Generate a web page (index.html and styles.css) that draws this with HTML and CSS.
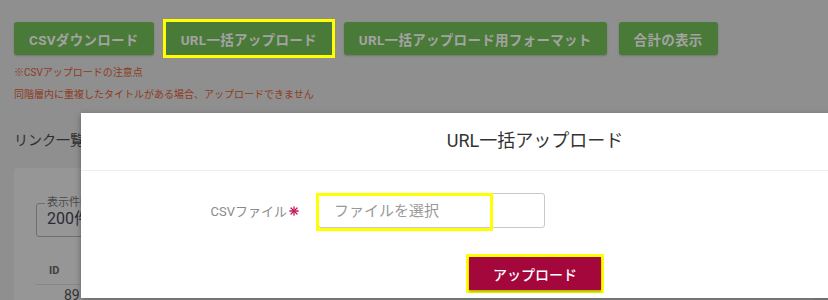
FILE: index.html
```html
<!DOCTYPE html>
<html lang="ja">
<head>
<meta charset="utf-8">
<link rel="stylesheet" href="styles.css">
</head>
<body>
<div class="page">
  <div class="toolbar">
    <button class="btn-green">CSVダウンロード</button>
    <span class="hl"><button class="btn-green">URL一括アップロード</button></span>
    <button class="btn-green">URL一括アップロード用フォーマット</button>
    <button class="btn-green">合計の表示</button>
  </div>
  <p class="note">※CSVアップロードの注意点</p>
  <p class="note">同階層内に重複したタイトルがある場合、アップロードできません</p>
  <h2 class="section-title">リンク一覧</h2>
  <div class="card">
    <fieldset class="select">
      <legend>表示件数</legend>
      <span>200件</span>
    </fieldset>
    <div class="thead">ID</div>
    <div class="trow">89</div>
  </div>
</div>

<div class="modal">
  <div class="modal-header">URL一括アップロード</div>
  <div class="modal-body">
    <div class="form-row">
      <label class="label">CSVファイル<svg class="req" viewBox="0 0 10 10" width="10" height="10"><g stroke="#c2185b" stroke-width="1.3" stroke-linecap="round"><line x1="5" y1="0.8" x2="5" y2="9.2"/><line x1="0.8" y1="5" x2="9.2" y2="5"/><line x1="2" y1="2" x2="8" y2="8"/><line x1="8" y1="2" x2="2" y2="8"/></g></svg></label>
      <div class="input">
        <span class="hl-input">ファイルを選択</span>
      </div>
    </div>
    <div class="actions">
      <span class="hl-btn"><button class="btn-upload">アップロード</button></span>
    </div>
  </div>
</div>
</body>
</html>
```

FILE: styles.css
```css
* { box-sizing: border-box; }
html, body {
  margin: 0;
  padding: 0;
  width: 828px;
  height: 300px;
  overflow: hidden;
  background: #8f8f8f;
  font-family: "Roboto", "Noto Sans CJK JP", sans-serif;
}
.page {
  padding: 22px 14px 0 14px;
}
.toolbar {
  display: flex;
  align-items: center;
  gap: 12px;
}
.btn-green {
  height: 33px;
  padding: 0 15px;
  border: none;
  border-radius: 3px;
  background: #4a7a38;
  color: #a3a3a3;
  font-family: inherit;
  font-size: 13.5px;
  font-weight: 700;
  letter-spacing: 0.3px;
  box-shadow: 0 1px 2px rgba(0,0,0,0.2);
}
.hl {
  display: inline-flex;
  outline: 3px solid #ffff00;
  outline-offset: 0;
}
.hl .btn-green { border-radius: 0; }
.note {
  margin: 0;
  font-size: 10px;
  line-height: 22px;
  color: #8e3b20;
}
.note:first-of-type { margin-top: 7px; }
.section-title {
  margin: 22px 0 0 0;
  font-size: 14px;
  font-weight: 400;
  color: #2e2e2e;
  line-height: 24px;
}
.card {
  margin-top: 16px;
  background: #969696;
  border-radius: 4px;
  height: 140px;
  padding: 29px 22px 0 22px;
}
.select {
  margin: 0;
  width: 120px;
  height: 40px;
  border: 1px solid #6f6f6f;
  border-radius: 3px;
  padding: 0 0 0 8px;
}
.select legend {
  font-size: 11px;
  color: #4a4a4a;
  padding: 0 2px;
  line-height: 12px;
}
.select span {
  font-size: 16px;
  color: #2a2a36;
  line-height: 22px;
  display: block;
  margin: -1px 0 0 2px;
}
.thead {
  margin-top: 22px;
  padding-left: 13px;
  font-size: 11px;
  font-weight: 700;
  color: #3f3f3f;
  height: 26px;
  line-height: 24px;
  border-bottom: 1px solid #888;
}
.trow {
  padding-left: 28px;
  font-size: 14px;
  color: #333;
  line-height: 20px;
}

.modal {
  position: absolute;
  left: 81px;
  top: 113px;
  width: 908px;
  height: 185px;
  background: #fff;
  box-shadow: 0 2px 6px rgba(0,0,0,0.35);
}
.modal-header {
  height: 58px;
  border-bottom: 1px solid #eeeeee;
  text-align: center;
  font-size: 18px;
  line-height: 56px;
  color: #333;
}
.modal-body {
  padding-top: 22px;
}
.form-row {
  display: flex;
  align-items: center;
}
.label {
  width: 218px;
  display: flex;
  justify-content: flex-end;
  align-items: center;
  gap: 2px;
  font-size: 13px;
  color: #8a8a8a;
}
.req {
  display: block;
}
.input {
  margin-left: 19px;
  width: 227px;
  height: 35px;
  border: 1px solid #c9c9c9;
  border-radius: 3px;
  display: flex;
}
.hl-input {
  width: 177px;
  height: 38px;
  margin: -1px 0 0 -3px;
  border: 3px solid #ffff00;
  padding-left: 15px;
  font-size: 15px;
  line-height: 31px;
  color: #999;
}
.actions {
  display: flex;
  justify-content: center;
  padding-top: 26px;
}
.hl-btn {
  display: inline-flex;
  border: 3px solid #ffff00;
}
.btn-upload {
  width: 132px;
  height: 33px;
  border: none;
  background: #a3073c;
  color: #fff;
  font-family: inherit;
  font-size: 14px;
  font-weight: 500;
  box-shadow: 0 2px 2px rgba(0,0,0,0.3);
}
```
